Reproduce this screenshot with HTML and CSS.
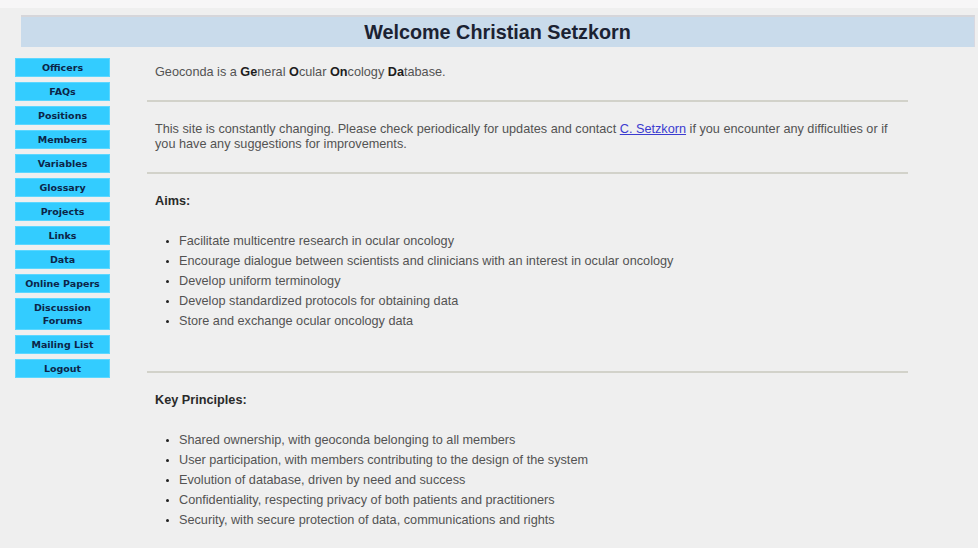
FILE: index.html
```html
<!DOCTYPE html>
<html lang="en">
<head>
<meta charset="utf-8">
<title>Geoconda</title>
<link rel="stylesheet" href="styles.css">
</head>
<body>
<div class="topstrip"></div>
<div class="page">
  <header class="banner">Welcome Christian Setzkorn</header>
  <div class="layout">
    <nav class="menu">
      <a class="btn" href="#">Officers</a>
      <a class="btn" href="#">FAQs</a>
      <a class="btn" href="#">Positions</a>
      <a class="btn" href="#">Members</a>
      <a class="btn" href="#">Variables</a>
      <a class="btn" href="#">Glossary</a>
      <a class="btn" href="#">Projects</a>
      <a class="btn" href="#">Links</a>
      <a class="btn" href="#">Data</a>
      <a class="btn" href="#">Online Papers</a>
      <a class="btn" href="#">Discussion<br>Forums</a>
      <a class="btn" href="#">Mailing List</a>
      <a class="btn" href="#">Logout</a>
    </nav>
    <main class="content">
      <section class="block intro">
        <p>Geoconda is a <b>Ge</b>neral <b>O</b>cular <b>On</b>cology <b>Da</b>tabase.</p>
      </section>
      <hr class="rule">
      <section class="block">
        <p>This site is constantly changing. Please check periodically for updates and contact <a class="link" href="#">C. Setzkorn</a> if you encounter any difficulties or if you have any suggestions for improvements.</p>
      </section>
      <hr class="rule">
      <section class="block tall">
        <h2 class="heading">Aims:</h2>
        <ul class="points">
          <li>Facilitate multicentre research in ocular oncology</li>
          <li>Encourage dialogue between scientists and clinicians with an interest in ocular oncology</li>
          <li>Develop uniform terminology</li>
          <li>Develop standardized protocols for obtaining data</li>
          <li>Store and exchange ocular oncology data</li>
        </ul>
      </section>
      <hr class="rule">
      <section class="block">
        <h2 class="heading">Key Principles:</h2>
        <ul class="points">
          <li>Shared ownership, with geoconda belonging to all members</li>
          <li>User participation, with members contributing to the design of the system</li>
          <li>Evolution of database, driven by need and success</li>
          <li>Confidentiality, respecting privacy of both patients and practitioners</li>
          <li>Security, with secure protection of data, communications and rights</li>
        </ul>
      </section>
    </main>
  </div>
</div>
</body>
</html>
```

FILE: styles.css
```css
html, body {
  margin: 0;
  padding: 0;
}

body {
  background: #efefef;
  font-family: "Liberation Sans", Arial, sans-serif;
  font-size: 12.7px;
  color: #535353;
}

.topstrip {
  height: 8px;
  background: #f7f6f7;
}

.page {
  padding: 7px 3px 0 15px;
}

.banner {
  margin-left: 6px;
  height: 30px;
  background: #c9dbeb;
  border-top: 2px solid #d6d6da;
  border-right: 1px solid #d8d8e0;
  font-size: 19.8px;
  font-weight: bold;
  color: #1b2232;
  text-align: center;
  line-height: 30px;
}

.layout {
  display: flex;
  align-items: flex-start;
  margin-top: 11px;
}

.menu {
  display: flex;
  flex-direction: column;
  gap: 5px;
  width: 95px;
  flex: none;
}

.btn {
  display: block;
  background: #33ccff;
  border: 1px solid #5cd7ff;
  padding: 2px 0;
  font-family: "DejaVu Sans", Verdana, sans-serif;
  font-size: 9.5px;
  font-weight: bold;
  line-height: 13px;
  color: #0c2548;
  text-align: center;
  text-decoration: none;
}

.content {
  margin-left: 37px;
  width: 761px;
}

.block {
  padding: 20px 8px;
}

.block.intro {
  padding-top: 7px;
}

.block.tall {
  padding-bottom: 40px;
}

.block p {
  margin: 0;
  line-height: 15px;
}

.block p b {
  color: #1e1e1e;
}

.link {
  color: #3b3bd0;
  text-decoration: underline;
}

.rule {
  margin: 0;
  height: 2px;
  border: 0;
  background: #d2d2ca;
}

.heading {
  margin: 0;
  font-size: 12.7px;
  font-weight: bold;
  line-height: 14px;
  color: #2a2a2a;
}

.points {
  margin: 23px 0 0;
  padding-left: 24px;
  list-style: disc;
}

.points li {
  line-height: 20px;
}

.points li::marker {
  color: #222;
  font-size: 10px;
}
```
